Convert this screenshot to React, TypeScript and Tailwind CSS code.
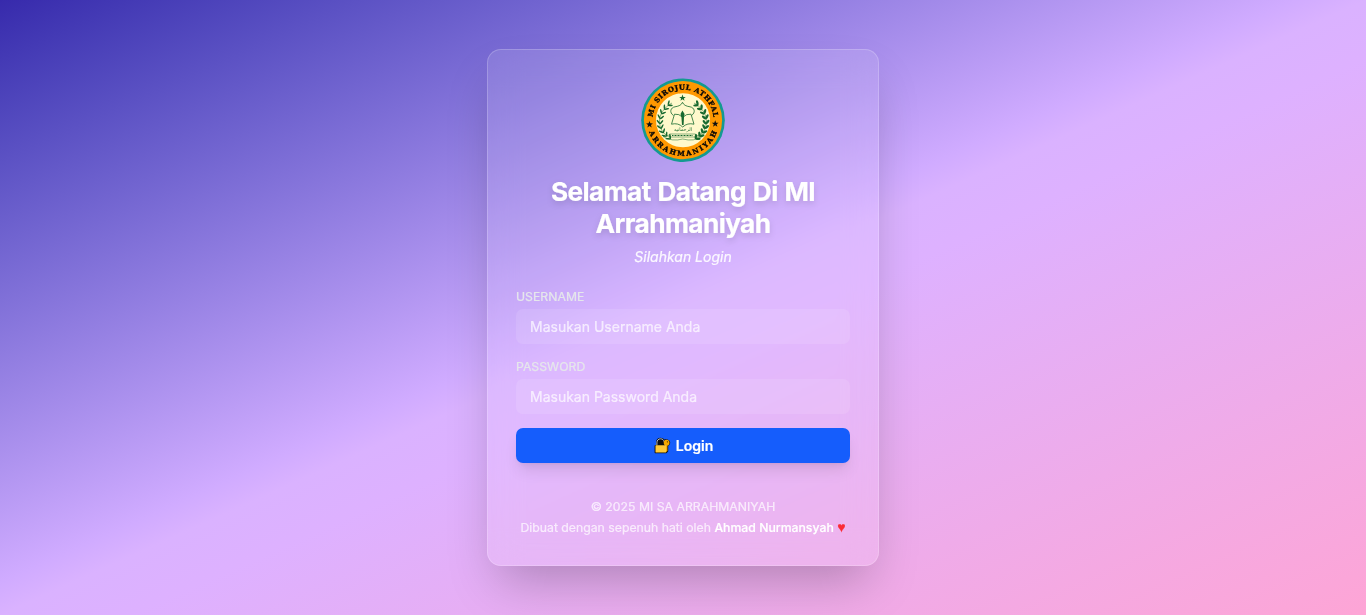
const STAR = 'M0 -4 L1 -1.3 L3.8 -1.2 L1.6 .5 L2.4 3.2 L0 1.6 L-2.4 3.2 L-1.6 .5 L-3.8 -1.2 L-1 -1.3Z';

const LEAVES = [
  { x: 27, y: 59, r: -48 },
  { x: 23.4, y: 56, r: -36 },
  { x: 20.8, y: 52.2, r: -24 },
  { x: 19.2, y: 47.6, r: -12 },
  { x: 18.8, y: 42.8, r: 0 },
  { x: 19.6, y: 37.8, r: 12 },
  { x: 21.8, y: 33, r: 26 },
  { x: 25.2, y: 28.8, r: 40 },
  { x: 29.4, y: 25.2, r: 55 },
];

function Laurel({ thin = false }: { thin?: boolean }) {
  const rx = thin ? 0.8 : 1.2;
  return (
    <g fill="#17692f">
      <path d="M30 60 C15 54 14 34 31 25" fill="none" stroke="#17692f" strokeWidth=".5" />
      {LEAVES.map((leaf) => (
        <g key={leaf.y} transform={`translate(${leaf.x} ${leaf.y}) rotate(${leaf.r})`}>
          <ellipse cx="-1.8" cy="0" rx={rx} ry="2.6" transform="rotate(-40)" />
          <ellipse cx="2.2" cy="0" rx={rx} ry="2.6" transform="rotate(40)" />
        </g>
      ))}
    </g>
  );
}

function Logo() {
  return (
    <svg viewBox="0 0 84 84" className="size-21" role="img" aria-label="MI Sirojul Athfal Arrahmaniyah">
      <defs>
        <path id="arc-top" d="M11.9 47 A30.5 30.5 0 1 1 72.1 47" />
        <path id="arc-bottom" d="M6.1 42 A35.9 35.9 0 0 0 77.9 42" />
      </defs>
      <circle cx="42" cy="42.2" r="41.8" fill="#149a91" />
      <circle cx="42" cy="42.2" r="39.1" fill="#ff9800" />
      <circle cx="42" cy="42.2" r="27" fill="#fff9cc" />
      <g
        fill="#080808"
        stroke="#080808"
        strokeWidth=".35"
        fontFamily="'DejaVu Serif', serif"
        fontWeight="700"
        fontSize="6.9"
        textAnchor="middle"
      >
        <text>
          <textPath href="#arc-top" startOffset="50%" textLength="90" lengthAdjust="spacing">MI SIROJUL ATHFAL</textPath>
        </text>
        <text>
          <textPath href="#arc-bottom" startOffset="50%" textLength="88" lengthAdjust="spacing">ARRAHMANIYAH</textPath>
        </text>
      </g>
      <path d={STAR} transform="translate(8.5 46.5) scale(.9)" fill="#111" />
      <path d={STAR} transform="translate(74.2 45.8) scale(.9)" fill="#111" />
      <path d={STAR} transform="translate(41.5 20) scale(.85)" fill="#17692f" />
      <Laurel thin />
      <g transform="translate(84 0) scale(-1 1)">
        <Laurel />
      </g>
      <g fill="none" stroke="#17692f" strokeWidth=".8">
        <path d="M32.5 37.5 C28 34.5 29.5 29.5 34 28.8 C38 28.2 40.5 27 41.5 24.3 C42.5 27 45 28.2 49 28.8 C53.5 29.5 55 34.5 50.5 37.5" />
        <path d="M33.5 36.2 Q38 35.5 41.7 39.3 Q45.5 35.5 50 36.2 L53 46.2 Q46.5 44.5 41.7 49 Q37 44.5 30.5 46.2Z" />
        <path d="M28.5 56 H54.5 V59 H28.5Z M28.5 57 L22 58.5 Q31 64 41.7 61 Q53 64 61 58.5 L54.5 57" strokeWidth=".5" />
        <path d="M31 57.5 H52" strokeWidth="1" strokeDasharray="1 .5" />
      </g>
      <path d="M39.5 36 L41.4 32.6 L43.6 36 L43 39 L42.6 47 H41 L40.4 39Z" fill="#17692f" />
      <text x="42" y="53" fontSize="4.8" textAnchor="middle" fill="#17692f" fontFamily="'DejaVu Sans', sans-serif">
        الرحمانيه
      </text>
    </svg>
  );
}

function LockWithKey() {
  return (
    <svg viewBox="0 0 17 17" className="size-[17px]" aria-hidden="true">
      <path
        d="M1.6 8 H2 V5.5 C2 2.4 4 .8 6.6 .8 C8.2 .8 9.5 1.5 10.2 2.6 C12.8 1.5 16.2 2.8 16.2 5.6 C16.2 7.1 15.4 8.2 14.2 8.8 V14.5 L12.3 16.3 H1.6 C1 16.3 .6 15.8 .6 15.2 V8.8 C.6 8.3 1 8 1.6 8Z"
        fill="#101010"
      />
      <path d="M2.9 8.3 V5.8 C2.9 3.3 4.4 1.8 6.6 1.8 C8.5 1.8 9.8 3 10.1 4.8" fill="none" stroke="#b8bdc3" strokeWidth="1" />
      <circle cx="12.6" cy="5.7" r="2.9" fill="#f5a900" />
      <path d="M11.2 7.8 H13.4 V14 L12 15 H11.2Z" fill="#f5a900" />
      <circle cx="13.4" cy="4.8" r=".65" fill="#402b00" />
      <rect x="1.5" y="8.2" width="10.6" height="7.2" rx=".5" fill="#ffc936" />
    </svg>
  );
}

function Field({ label, type, placeholder }: { label: string; type: string; placeholder: string }) {
  return (
    <label className="block">
      <span className="mb-[3.5px] block text-[12.25px] leading-[17.5px] text-gray-200">{label}</span>
      <input
        type={type}
        placeholder={placeholder}
        className="block h-[35px] w-full rounded-[7px] bg-white/10 px-3.5 text-[14px] leading-[21px] text-white outline-none placeholder:text-white/70"
      />
    </label>
  );
}

export default function App() {
  return (
    <main className="flex h-[615px] items-center justify-center overflow-hidden bg-gradient-to-br from-indigo-800 via-purple-300 to-pink-300 font-['Inter',sans-serif] text-[14px] leading-[21px] [-webkit-text-stroke:0.2px]">
      <section className="w-[392px] rounded-[14px] border border-white/20 bg-white/10 p-7 shadow-2xl backdrop-blur-lg">
        <header className="mb-[21px] flex flex-col items-center text-center">
          <Logo />
          <h1 className="mt-3.5 text-[26.25px] leading-8 font-bold tracking-[-0.6px] text-white drop-shadow-md [word-spacing:1.2px]">
            Selamat Datang Di MI Arrahmaniyah
          </h1>
          <p className="mt-1.5 text-white/90 italic">Silahkan Login</p>
        </header>
        <form className="space-y-3.5" onSubmit={(e) => e.preventDefault()}>
          <Field label="USERNAME" type="text" placeholder="Masukan Username Anda" />
          <Field label="PASSWORD" type="password" placeholder="Masukan Password Anda" />
          <button className="flex h-[35px] w-full items-center justify-center gap-[5px] rounded-[7px] bg-blue-600 pl-px font-semibold text-white shadow-lg">
            <LockWithKey />
            Login
          </button>
        </form>
        <footer className="mt-[35px] text-center text-[12.25px] leading-[17.5px] text-white/70">
          <p>© 2025 MI SA ARRAHMANIYAH</p>
          <p className="mt-[3.5px]">
            Dibuat dengan sepenuh hati oleh <span className="font-medium text-white">Ahmad Nurmansyah</span>{' '}
            <span className="font-['Liberation_Sans',sans-serif] text-[14px] leading-none text-red-500">♥</span>
          </p>
        </footer>
      </section>
    </main>
  );
}
